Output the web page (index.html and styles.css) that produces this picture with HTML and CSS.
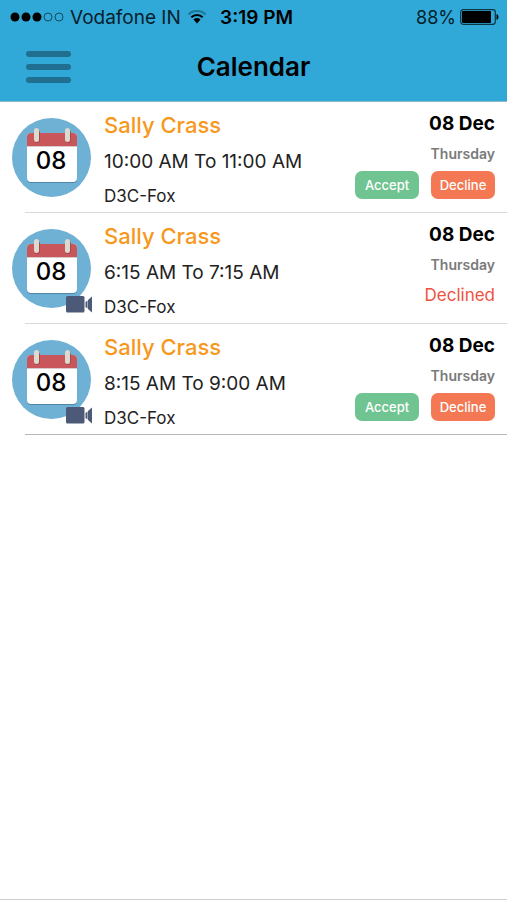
FILE: index.html
```html
<!DOCTYPE html>
<html lang="en">
<head>
  <meta charset="UTF-8">
  <meta name="viewport" content="width=device-width, initial-scale=1">
  <title>Calendar</title>
  <link rel="stylesheet" href="styles.css">
</head>
<body>

<!-- Shared icons -->
<svg class="sprite" width="0" height="0" aria-hidden="true">
  <symbol id="calendar" viewBox="0 0 80 80">
    <circle cx="39.500" cy="39.500" r="39.500" fill="#6fb0d5"/>
    <rect x="15" y="17" width="50" height="48" rx="4" fill="#4e86a6"/>
    <rect x="15" y="15" width="50" height="49" rx="4" fill="#fff"/>
    <path d="M15 28V19a4 4 0 0 1 4-4h42a4 4 0 0 1 4 4v9z" fill="#c9565a"/>
    <rect x="15" y="28" width="50" height="1" fill="#d9c9cb"/>
    <rect x="22" y="12" width="6" height="13" rx="3" fill="#a5484c"/>
    <rect x="53" y="12" width="6" height="13" rx="3" fill="#a5484c"/>
    <rect x="22" y="10" width="5" height="14" rx="2.500" fill="#ddd9cc"/>
    <rect x="53" y="10" width="5" height="14" rx="2.500" fill="#ddd9cc"/>
  </symbol>
  <symbol id="video" viewBox="0 0 26 17">
    <rect x="0" y="0" width="18.500" height="16.500" rx="1.500" fill="#4c5a78"/>
    <path d="M19.500 6v5l2 1.500v-8z" fill="#4c5a78"/>
    <path d="M22 4l4-3.500v16L22 13z" fill="#4c5a78"/>
  </symbol>
</svg>

<div class="screen">
  <header class="header">
    <div class="status-bar">
      <div class="carrier">
        <svg width="54" height="12" viewBox="0 0 54 12" aria-hidden="true">
          <circle cx="5" cy="6" r="4.500"/>
          <circle cx="16" cy="6" r="4.500"/>
          <circle cx="27" cy="6" r="4.500"/>
          <circle cx="38" cy="6" r="4" fill="none" stroke="#124a61"/>
          <circle cx="49" cy="6" r="4" fill="none" stroke="#124a61"/>
        </svg>
        <span>Vodafone IN</span>
        <svg width="20" height="14" viewBox="0 0 20 14" aria-hidden="true">
          <path d="M1.500 4.500C6-.2 14-.2 18.500 4.500" fill="none" stroke="#1c7696" stroke-width="2"/>
          <path d="M4.300 7.300c3.200-3.200 8.200-3.200 11.400 0" fill="none" stroke="#000" stroke-width="2"/>
          <path d="M6.500 9.500c2-2 5-2 7 0L10 13.500z"/>
        </svg>
      </div>
      <span class="time">3:19 PM</span>
      <div class="battery">
        <span>88%</span>
        <svg width="39" height="16" viewBox="0 0 39 16" aria-hidden="true">
          <rect x=".7" y=".7" width="34.600" height="14.600" rx="2.500" fill="none" stroke="#0b3444" stroke-width="1.200"/>
          <rect x="2" y="2" width="29" height="12" rx="1"/>
          <path d="M36.500 5q2 .5 2 3t-2 3z"/>
        </svg>
      </div>
    </div>
    <div class="nav">
      <button class="menu" type="button" aria-label="Menu">
        <span class="bar"></span>
        <span class="bar"></span>
        <span class="bar"></span>
      </button>
      <h1>Calendar</h1>
    </div>
  </header>

  <ul class="events">
    <li class="event">
      <div class="icon">
        <svg width="80" height="80" aria-hidden="true"><use href="#calendar"/></svg>
        <span class="day">08</span>
      </div>
      <div class="content">
        <div class="info">
          <h2>Sally Crass</h2>
          <p class="hours">10:00 AM To 11:00 AM</p>
          <p class="room">D3C-Fox</p>
        </div>
        <div class="side">
          <p class="date">08 Dec</p>
          <p class="weekday">Thursday</p>
          <div class="actions">
            <button class="btn accept" type="button">Accept</button>
            <button class="btn decline" type="button">Decline</button>
          </div>
        </div>
      </div>
    </li>

    <li class="event">
      <div class="icon">
        <svg width="80" height="80" aria-hidden="true"><use href="#calendar"/></svg>
        <span class="day">08</span>
        <svg class="video" width="26" height="17" aria-hidden="true"><use href="#video"/></svg>
      </div>
      <div class="content">
        <div class="info">
          <h2>Sally Crass</h2>
          <p class="hours">6:15 AM To 7:15 AM</p>
          <p class="room">D3C-Fox</p>
        </div>
        <div class="side">
          <p class="date">08 Dec</p>
          <p class="weekday">Thursday</p>
          <p class="declined">Declined</p>
        </div>
      </div>
    </li>

    <li class="event">
      <div class="icon">
        <svg width="80" height="80" aria-hidden="true"><use href="#calendar"/></svg>
        <span class="day">08</span>
        <svg class="video" width="26" height="17" aria-hidden="true"><use href="#video"/></svg>
      </div>
      <div class="content">
        <div class="info">
          <h2>Sally Crass</h2>
          <p class="hours">8:15 AM To 9:00 AM</p>
          <p class="room">D3C-Fox</p>
        </div>
        <div class="side">
          <p class="date">08 Dec</p>
          <p class="weekday">Thursday</p>
          <div class="actions">
            <button class="btn accept" type="button">Accept</button>
            <button class="btn decline" type="button">Decline</button>
          </div>
        </div>
      </div>
    </li>
  </ul>
</div>

</body>
</html>
```
FILE: styles.css
```css
* {
  box-sizing: border-box;
}

body {
  margin: 0;
  background: #fff;
  color: #000;
  font-family: Inter, "Liberation Sans", sans-serif;
}

h1, h2, p, ul {
  margin: 0;
  padding: 0;
}

button {
  border: none;
  font-family: inherit;
  cursor: pointer;
}

.sprite {
  position: absolute;
}

.screen {
  min-height: 100vh;
  border-bottom: 1px solid #cecece;
}

/* Header */
.header {
  background: #30a8d8;
  border-bottom: 1px solid #8fb9c9;
}

.status-bar {
  display: grid;
  grid-template-columns: 1fr auto 1fr;
  align-items: center;
  height: 34px;
  padding: 0 8px 0 10px;
  font-size: 19px;
}

.carrier, .battery {
  display: flex;
  align-items: center;
  gap: 6px;
  white-space: nowrap;
  color: #06202b;
}

/* keep both side columns the same width so the time stays centered */
.carrier {
  min-width: 0;
}

.battery {
  justify-content: flex-end;
  gap: 4px;
  font-size: 18px;
}

.time {
  padding-left: 4px;
  font-weight: 600;
}

.nav {
  display: grid;
  grid-template-columns: 1fr auto 1fr;
  align-items: center;
  height: 67px;
  padding: 0 26px 2px;
}

.menu {
  display: flex;
  flex-direction: column;
  gap: 7px;
  width: 45px;
  padding: 0;
  background: none;
}

.bar {
  width: 100%;
  height: 6px;
  border-radius: 3px;
  background: #216f90;
}

h1 {
  font-size: 26px;
  font-weight: 600;
}

/* List of events */
.events {
  list-style: none;
}

.event {
  display: flex;
  padding-left: 12px;
  /* divider starts 25px from the left edge */
  background: linear-gradient(#d9d9d9, #d9d9d9) 25px 100% / 100% 1px no-repeat;
}

.event:last-child {
  background-image: linear-gradient(#b8b8b8, #b8b8b8);
}

.icon {
  position: relative;
  width: 80px;
  height: 80px;
  margin: 16px 12px 15px 0;
}

.day {
  position: absolute;
  top: 29px;
  left: 0;
  width: 78px;
  font-size: 24px;
  font-weight: 500;
  line-height: 28px;
  text-align: center;
}

.video {
  position: absolute;
  right: 0;
  bottom: -4px;
}

.content {
  display: flex;
  flex: 1;
  justify-content: space-between;
  padding: 8px 12px 0 0;
}

h2 {
  color: #f7981d;
  font-size: 22px;
  font-weight: 500;
  line-height: 30px;
}

.hours {
  margin-top: 6px;
  color: #222;
  font-size: 19px;
  line-height: 32px;
}

.room {
  margin-top: 4px;
  color: #222;
  font-size: 17px;
  line-height: 28px;
}

.side {
  text-align: right;
}

.date {
  font-size: 19px;
  font-weight: 700;
  line-height: 28px;
}

.weekday {
  margin-top: 6px;
  color: #7a7a7a;
  font-size: 14px;
  font-weight: 600;
  line-height: 20px;
}

.actions {
  display: flex;
  gap: 12px;
  margin-top: 7px;
}

.btn {
  width: 64px;
  height: 28px;
  padding: 0;
  border-radius: 7px;
  color: #fff;
  font-size: 13px;
  font-weight: 500;
}

.accept {
  background: #70c491;
}

.decline {
  background: #f37853;
}

.declined {
  margin-top: 6px;
  color: #ee5340;
  font-size: 17px;
  line-height: 28px;
}
```
